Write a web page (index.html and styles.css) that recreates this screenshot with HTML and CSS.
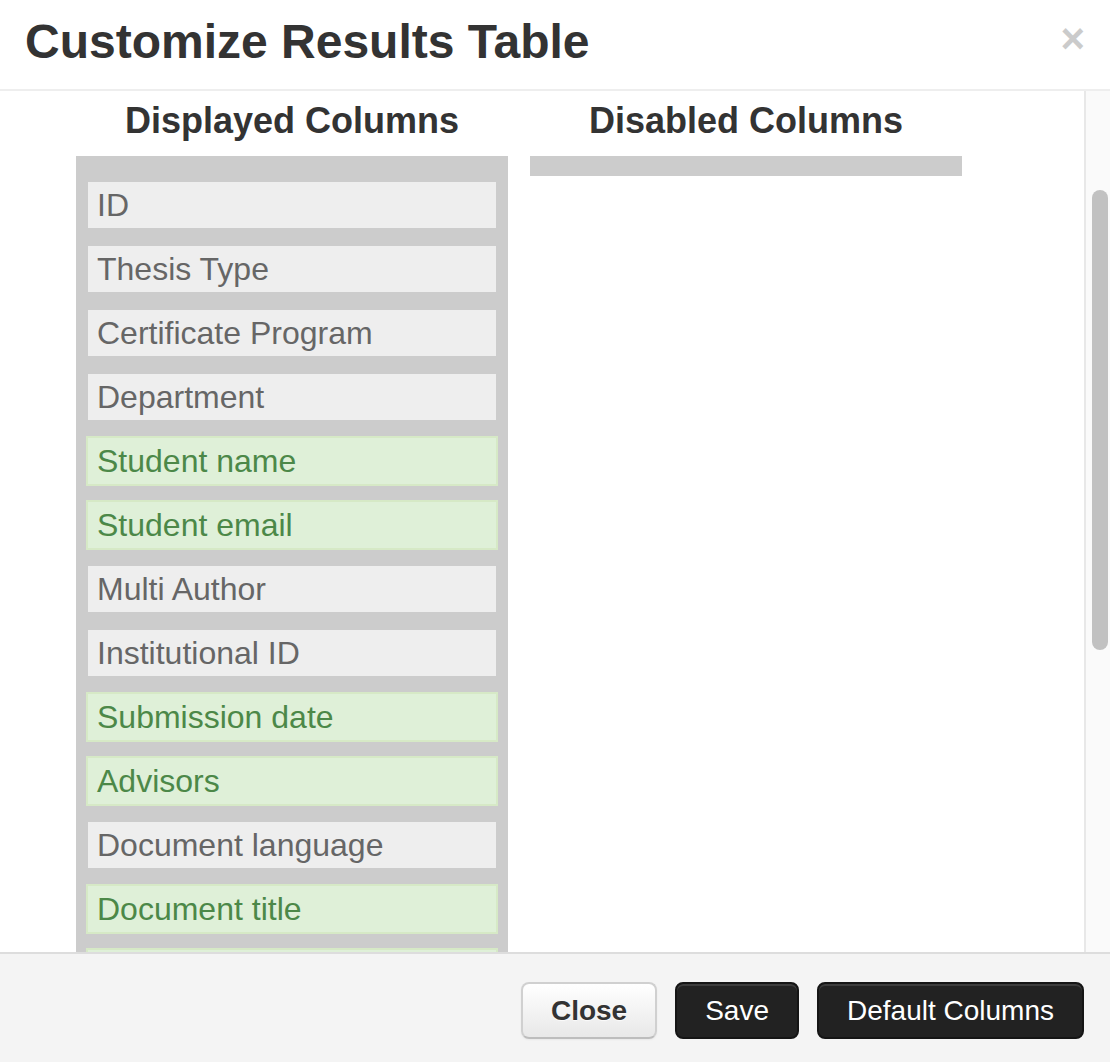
FILE: index.html
```html
<!DOCTYPE html>
<html lang="en">
<head>
<meta charset="utf-8">
<title>Customize Results Table</title>
<link rel="stylesheet" href="styles.css">
</head>
<body>
<div class="modal">
  <header class="modal-header">
    <h1 class="modal-title">Customize Results Table</h1>
    <button class="close" type="button" aria-label="Close">&times;</button>
  </header>
  <div class="modal-body">
    <div class="body-content">
      <section class="column">
        <h2 class="column-title">Displayed Columns</h2>
        <ul class="col-list">
          <li class="col-item">ID</li>
          <li class="col-item">Thesis Type</li>
          <li class="col-item">Certificate Program</li>
          <li class="col-item">Department</li>
          <li class="col-item success">Student name</li>
          <li class="col-item success">Student email</li>
          <li class="col-item">Multi Author</li>
          <li class="col-item">Institutional ID</li>
          <li class="col-item success">Submission date</li>
          <li class="col-item success">Advisors</li>
          <li class="col-item">Document language</li>
          <li class="col-item success">Document title</li>
          <li class="col-item success"></li>
        </ul>
      </section>
      <section class="column">
        <h2 class="column-title">Disabled Columns</h2>
        <ul class="col-list"></ul>
      </section>
    </div>
    <div class="scrollbar"><div class="thumb"></div></div>
  </div>
  <footer class="modal-footer">
    <button class="btn btn-light" type="button">Close</button>
    <button class="btn btn-dark" type="button">Save</button>
    <button class="btn btn-dark" type="button">Default Columns</button>
  </footer>
</div>
</body>
</html>
```

FILE: styles.css
```css
html, body {
  margin: 0;
  padding: 0;
  height: 100%;
  background: #fff;
}

body {
  font-family: "Liberation Sans", Arial, Helvetica, sans-serif;
  color: #333;
}

.modal {
  height: 100%;
  display: flex;
  flex-direction: column;
  overflow: hidden;
}

.modal-header {
  flex: 0 0 auto;
  display: flex;
  justify-content: space-between;
  align-items: flex-start;
  padding: 15px 25px 21px 25px;
  height: 53px;
  border-bottom: 2px solid #eeeeee;
}

.modal-title {
  margin: 0;
  font-size: 48px;
  line-height: 53px;
  font-weight: bold;
  color: #333;
}

.close {
  margin: 3px 0 0 0;
  padding: 0;
  border: 0;
  background: none;
  font-family: "Liberation Sans", Arial, sans-serif;
  font-size: 42px;
  font-weight: bold;
  line-height: 42px;
  color: #000;
  opacity: 0.2;
  cursor: pointer;
}

.modal-body {
  flex: 1 1 auto;
  min-height: 0;
  display: flex;
  overflow: hidden;
}

.body-content {
  flex: 1 1 auto;
  display: grid;
  grid-template-columns: 432px 432px;
  column-gap: 22px;
  align-items: start;
  padding: 10px 0 0 76px;
  overflow: hidden;
}

.column-title {
  margin: 0 0 15px 0;
  text-align: center;
  font-size: 36px;
  line-height: 40px;
  font-weight: bold;
  color: #333;
}

.col-list {
  list-style: none;
  margin: 0;
  padding: 10px;
  background: #cccccc;
}

.col-item {
  margin-top: 14px;
  height: 46px;
  padding: 0 9px;
  border: 2px solid #cccccc;
  background: #eeeeee;
  color: #666;
  font-size: 32px;
  line-height: 46px;
  white-space: nowrap;
}

.col-item.success {
  background: #dff0d8;
  border-color: #d6e9c6;
  color: #4c8848;
}

.scrollbar {
  flex: 0 0 26px;
  border-left: 2px solid #e8e8e8;
  background: #fafafa;
  padding: 99px 0 0 6px;
  box-sizing: border-box;
  width: 26px;
}

.thumb {
  width: 16px;
  height: 460px;
  border-radius: 8px;
  background: #c1c1c1;
}

.modal-footer {
  flex: 0 0 auto;
  box-sizing: border-box;
  height: 110px;
  border-top: 2px solid #dddddd;
  background: #f4f4f4;
  display: flex;
  justify-content: flex-end;
  align-items: flex-start;
  gap: 18px;
  padding: 28px 26px 0 0;
}

.btn {
  font-family: "Liberation Sans", Arial, Helvetica, sans-serif;
  font-size: 28px;
  line-height: 41px;
  height: 57px;
  padding: 6px 28px;
  border-radius: 8px;
  border: 2px solid;
  cursor: pointer;
}

.btn-light {
  font-weight: bold;
  color: #333;
  background: linear-gradient(#ffffff, #e8e8e8);
  border-color: #d0d0d0 #d0d0d0 #bdbdbd;
  text-shadow: 0 1px 1px rgba(255, 255, 255, 0.75);
  box-shadow: inset 0 2px 0 rgba(255, 255, 255, 0.2), 0 1px 2px rgba(0, 0, 0, 0.05);
}

.btn-dark {
  font-weight: normal;
  color: #fff;
  background: #222222;
  border-color: #151515;
  box-shadow: inset 0 2px 0 rgba(255, 255, 255, 0.12);
}
```
